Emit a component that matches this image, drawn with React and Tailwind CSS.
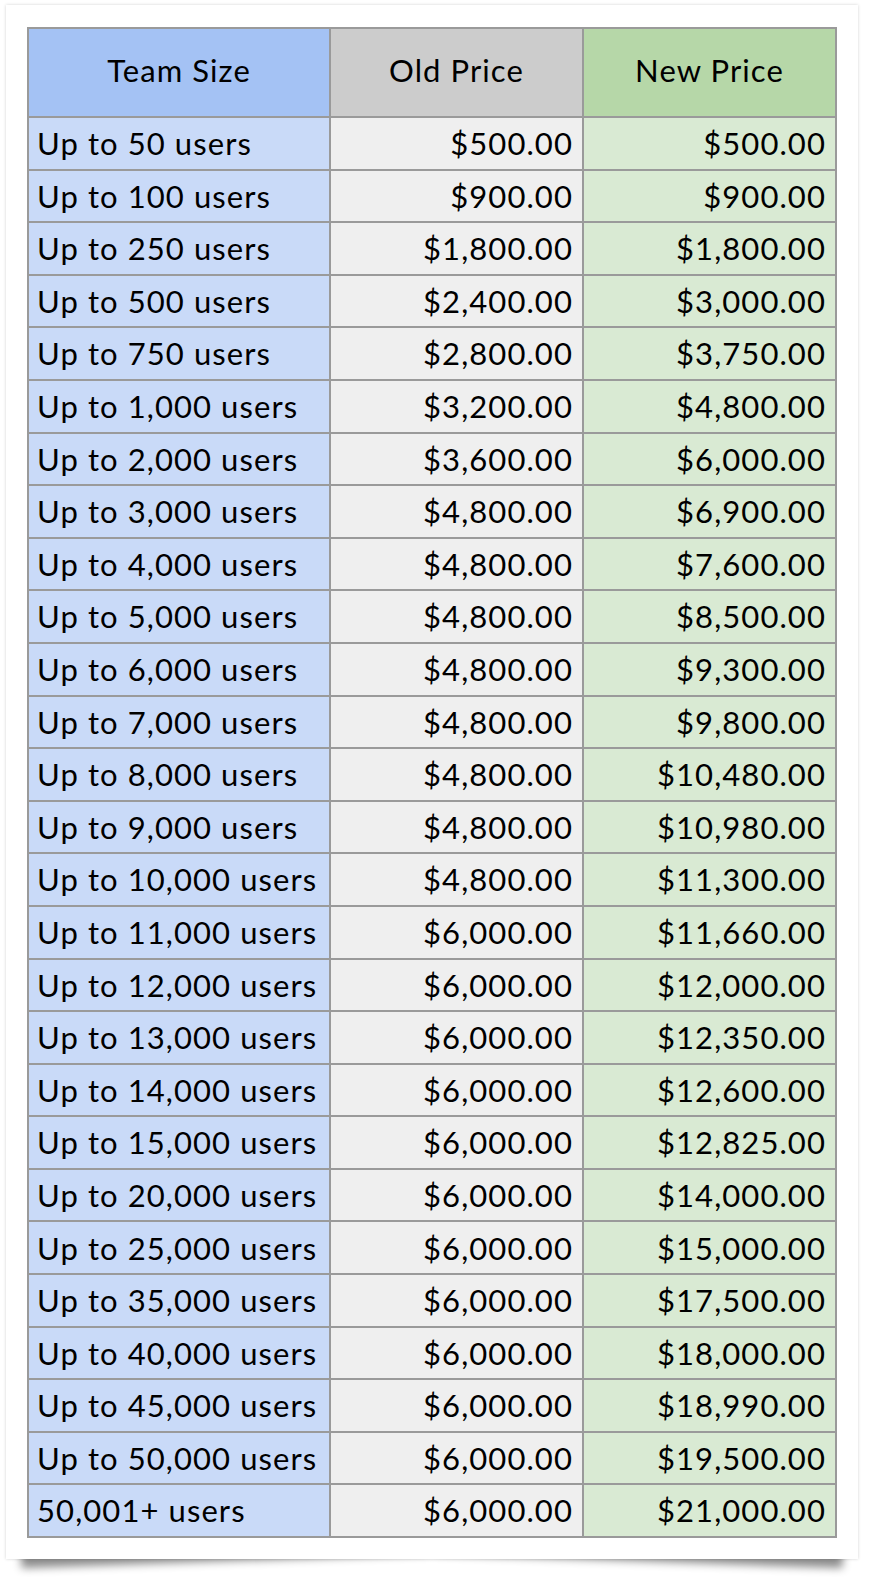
const rows = [
  ["Up to 50 users", "$500.00", "$500.00"],
  ["Up to 100 users", "$900.00", "$900.00"],
  ["Up to 250 users", "$1,800.00", "$1,800.00"],
  ["Up to 500 users", "$2,400.00", "$3,000.00"],
  ["Up to 750 users", "$2,800.00", "$3,750.00"],
  ["Up to 1,000 users", "$3,200.00", "$4,800.00"],
  ["Up to 2,000 users", "$3,600.00", "$6,000.00"],
  ["Up to 3,000 users", "$4,800.00", "$6,900.00"],
  ["Up to 4,000 users", "$4,800.00", "$7,600.00"],
  ["Up to 5,000 users", "$4,800.00", "$8,500.00"],
  ["Up to 6,000 users", "$4,800.00", "$9,300.00"],
  ["Up to 7,000 users", "$4,800.00", "$9,800.00"],
  ["Up to 8,000 users", "$4,800.00", "$10,480.00"],
  ["Up to 9,000 users", "$4,800.00", "$10,980.00"],
  ["Up to 10,000 users", "$4,800.00", "$11,300.00"],
  ["Up to 11,000 users", "$6,000.00", "$11,660.00"],
  ["Up to 12,000 users", "$6,000.00", "$12,000.00"],
  ["Up to 13,000 users", "$6,000.00", "$12,350.00"],
  ["Up to 14,000 users", "$6,000.00", "$12,600.00"],
  ["Up to 15,000 users", "$6,000.00", "$12,825.00"],
  ["Up to 20,000 users", "$6,000.00", "$14,000.00"],
  ["Up to 25,000 users", "$6,000.00", "$15,000.00"],
  ["Up to 35,000 users", "$6,000.00", "$17,500.00"],
  ["Up to 40,000 users", "$6,000.00", "$18,000.00"],
  ["Up to 45,000 users", "$6,000.00", "$18,990.00"],
  ["Up to 50,000 users", "$6,000.00", "$19,500.00"],
  ["50,001+ users", "$6,000.00", "$21,000.00"],
];

export default function App() {
  return (
    <div className="min-h-[1588px] bg-white pl-[6px] pt-[5px] font-['Lato','Open_Sans',sans-serif] text-[31px] font-normal tracking-[0.035em] text-black">
      <div className="relative isolate w-[852px]">
        {/* lifted-corner shadows */}
        <div className="absolute bottom-[8px] left-[14px] -z-10 h-[60px] w-[48%] -rotate-[2deg] shadow-[0_10px_8px_rgba(0,0,0,0.45)]" />
        <div className="absolute bottom-[8px] right-[14px] -z-10 h-[60px] w-[48%] rotate-[2deg] shadow-[0_10px_8px_rgba(0,0,0,0.45)]" />

        <div className="h-[1554px] bg-white px-[21px] pt-[22px] shadow-[0_0_3px_rgba(0,0,0,0.18)]">
          <div className="grid grid-cols-[300px_251px_251px] grid-rows-[87px_repeat(27,50.6px)] gap-[2px] border-2 border-[#9a9a9a] bg-[#9a9a9a]">
            <div className="flex items-center justify-center bg-[#a4c2f4] pb-[5px]">Team Size</div>
            <div className="flex items-center justify-center bg-[#cccccc] pb-[5px]">Old Price</div>
            <div className="flex items-center justify-center bg-[#b6d7a8] pb-[5px]">New Price</div>

            {rows.map(([size, oldPrice, newPrice]) => (
              <Row key={size} size={size} oldPrice={oldPrice} newPrice={newPrice} />
            ))}
          </div>
        </div>
      </div>
    </div>
  );
}

function Row({ size, oldPrice, newPrice }) {
  return (
    <>
      <div className="flex items-center whitespace-nowrap bg-[#c9daf8] pl-[8px]">{size}</div>
      <div className="flex items-center justify-end whitespace-nowrap bg-[#efefef] pr-[9px]">{oldPrice}</div>
      <div className="flex items-center justify-end whitespace-nowrap bg-[#d9ead3] pr-[9px]">{newPrice}</div>
    </>
  );
}
